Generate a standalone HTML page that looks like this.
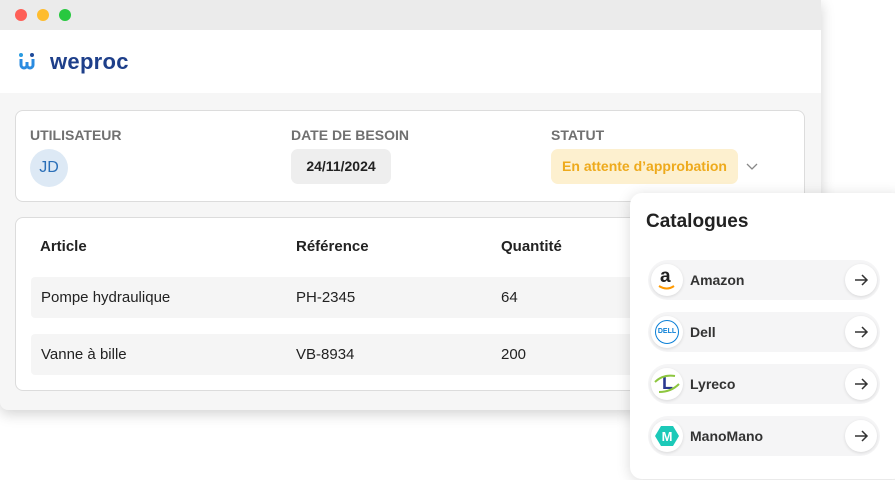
<!DOCTYPE html>
<html><head><meta charset="utf-8"><style>
*{box-sizing:border-box;margin:0;padding:0}
body{width:895px;height:480px;background:#fff;font-family:"Liberation Sans",sans-serif;position:relative;overflow:hidden}
.win{position:absolute;left:0;top:0;width:821px;height:410px;background:#f6f6f6;border-radius:0 0 8px 8px;box-shadow:0 4px 14px rgba(0,0,0,.18);overflow:hidden}
.tb{height:30px;background:#ebebeb}
.dot{position:absolute;top:9px;width:12px;height:12px;border-radius:50%}
.hd{height:63px;background:#fff;position:relative}
.card{position:absolute;left:15px;width:790px;background:#fff;border:1px solid #dcdcdc;border-radius:8px}
.lbl{position:absolute;top:16px;font-size:14px;color:#707070;font-weight:bold}
.th{position:absolute;top:20px;font-size:15px;color:#222;font-weight:bold}
.row{position:absolute;left:15px;width:620px;height:41px;background:#f5f5f5;border-radius:4px;font-size:15px;color:#222}
.row span{position:absolute;top:12px}
.cat{position:absolute;left:630px;top:193px;width:275px;height:286px;background:#fff;border-radius:12px;box-shadow:0 2px 14px rgba(0,0,0,.15)}
.it{position:absolute;left:18px;width:232px;height:40px;background:#f5f5f6;border-radius:20px}
.ic{position:absolute;left:3px;top:4px;width:32px;height:32px;border-radius:50%;background:#fff;box-shadow:0 1px 3px rgba(0,0,0,.12)}
.ar{position:absolute;right:3px;top:4px;width:32px;height:32px;border-radius:50%;background:#fff;box-shadow:0 1px 3px rgba(0,0,0,.12)}
.ar svg{position:absolute;left:8px;top:8px}
.nm{position:absolute;left:42px;top:12px;font-size:14px;font-weight:bold;color:#333}
</style></head><body>
<div class="win">
 <div class="tb"></div>
 <div class="dot" style="left:15px;background:#fe5f57"></div>
 <div class="dot" style="left:37px;background:#febc2e"></div>
 <div class="dot" style="left:59px;background:#28c840"></div>
 <div class="hd">
  <svg style="position:absolute;left:18px;top:22px" width="20" height="20" viewBox="0 0 20 20"><circle cx="3" cy="3" r="2" fill="#2a9be0"/><circle cx="14" cy="3" r="2" fill="#1e4a9a"/><path d="M3 7v6a3 3 0 0 0 6 0v-3M9 10v3a3 3 0 0 0 6 0V7" stroke="#2a8be0" stroke-width="3" fill="none"/></svg>
  <div style="position:absolute;left:50px;top:19px;font-size:22px;font-weight:bold;color:#1e3f8a;letter-spacing:.3px">weproc</div>
 </div>
 <div class="card" style="top:110px;height:92px">
  <div class="lbl" style="left:14px">UTILISATEUR</div>
  <div class="lbl" style="left:275px">DATE DE BESOIN</div>
  <div class="lbl" style="left:535px">STATUT</div>
  <div style="position:absolute;left:14px;top:38px;width:38px;height:38px;border-radius:50%;background:#dde9f5;color:#2a6fb8;font-size:16px;text-align:center;line-height:38px">JD</div>
  <div style="position:absolute;left:275px;top:38px;width:100px;height:35px;border-radius:7px;background:#eee;font-size:14px;font-weight:bold;color:#222;text-align:center;line-height:35px">24/11/2024</div>
  <div style="position:absolute;left:535px;top:38px;width:187px;height:35px;border-radius:7px;background:#fdf0cf;font-size:14px;font-weight:bold;color:#eeaa1c;text-align:center;line-height:35px">En attente d’approbation</div>
  <svg style="position:absolute;left:730px;top:52px" width="12" height="8"><path d="M1 1l5 5 5-5" stroke="#888" fill="none" stroke-width="1.3"/></svg>
 </div>
 <div class="card" style="top:217px;height:174px">
  <div class="th" style="left:24px">Article</div>
  <div class="th" style="left:280px">Référence</div>
  <div class="th" style="left:485px">Quantité</div>
  <div class="row" style="top:59px"><span style="left:10px">Pompe hydraulique</span><span style="left:265px">PH-2345</span><span style="left:470px">64</span></div>
  <div class="row" style="top:116px"><span style="left:10px">Vanne à bille</span><span style="left:265px">VB-8934</span><span style="left:470px">200</span></div>
 </div>
</div>
<div class="cat">
 <div style="position:absolute;left:16px;top:18px;font-size:19px;font-weight:bold;color:#222">Catalogues</div>
 <div class="it" style="top:67px"><div class="ic"><div style="position:absolute;left:9px;top:2px;font-size:19px;font-weight:bold;color:#222">a</div><svg style="position:absolute;left:7px;top:21px" width="18" height="6"><path d="M1 1q8 5 15 0" stroke="#f90" stroke-width="2" fill="none"/></svg></div><div class="nm">Amazon</div><div class="ar"><svg width="16" height="16"><path d="M2 8h12M9 3l5 5-5 5" stroke="#333" stroke-width="1.5" fill="none"/></svg></div></div>
 <div class="it" style="top:119px"><div class="ic"><div style="position:absolute;left:4px;top:4px;width:24px;height:24px;border:1.5px solid #0a7fd6;border-radius:50%;font-size:7px;font-weight:bold;color:#0a7fd6;text-align:center;line-height:21px">DELL</div></div><div class="nm">Dell</div><div class="ar"><svg width="16" height="16"><path d="M2 8h12M9 3l5 5-5 5" stroke="#333" stroke-width="1.5" fill="none"/></svg></div></div>
 <div class="it" style="top:171px"><div class="ic"><div style="position:absolute;left:11px;top:5px;font-size:18px;font-weight:bold;color:#2b3990">L</div><svg style="position:absolute;left:2px;top:6px" width="28" height="20"><path d="M2 8q8-8 20-6M6 18q12 0 20-8" stroke="#8dc63f" stroke-width="2" fill="none"/></svg></div><div class="nm">Lyreco</div><div class="ar"><svg width="16" height="16"><path d="M2 8h12M9 3l5 5-5 5" stroke="#333" stroke-width="1.5" fill="none"/></svg></div></div>
 <div class="it" style="top:223px"><div class="ic"><svg style="position:absolute;left:4px;top:5px" width="24" height="22"><path d="M6 1h12l6 10-6 10H6L0 11z" fill="#1cc9b8"/><text x="12" y="16" font-size="13" font-weight="bold" fill="#fff" text-anchor="middle" font-family="Liberation Sans">M</text></svg></div><div class="nm">ManoMano</div><div class="ar"><svg width="16" height="16"><path d="M2 8h12M9 3l5 5-5 5" stroke="#333" stroke-width="1.5" fill="none"/></svg></div></div>
</div>
</body></html>
